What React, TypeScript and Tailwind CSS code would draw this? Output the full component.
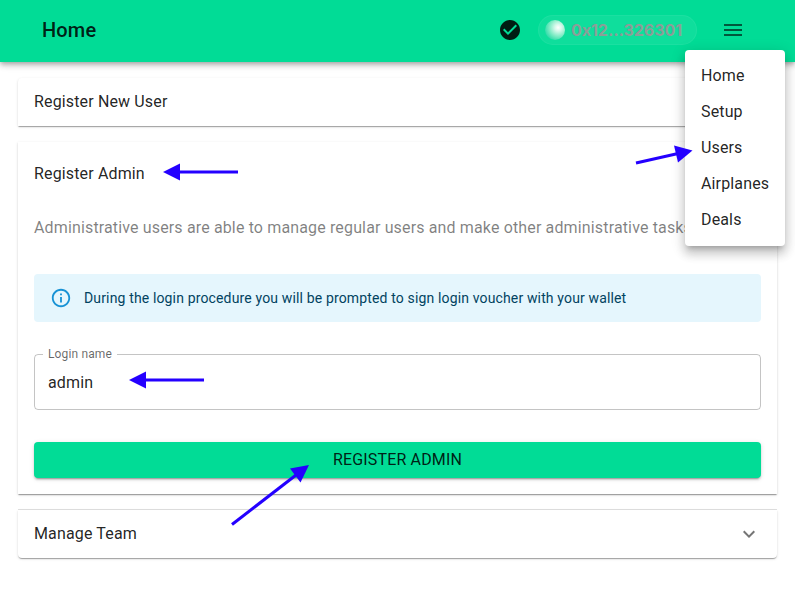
import React from "react";

const paper =
  "bg-white shadow-[0_2px_1px_-1px_rgba(0,0,0,0.2),0_1px_1px_0_rgba(0,0,0,0.14),0_1px_3px_0_rgba(0,0,0,0.12)]";

const menuItems = ["Home", "Setup", "Users", "Airplanes", "Deals"];

function Header() {
  return (
    <header className="relative flex h-[62px] items-center bg-[#01dc96] pl-[42px] pr-[50px] shadow-[0_2px_4px_-1px_rgba(0,0,0,0.2),0_4px_5px_0_rgba(0,0,0,0.14),0_1px_10px_0_rgba(0,0,0,0.12)]">
      <h1 className="grow pb-0.5 text-xl font-medium leading-8 tracking-[0.0075em] text-black/87">Home</h1>
      <div className="flex items-center pb-0.5">
        <svg viewBox="0 0 24 24" className="size-6 fill-black/87">
          <path d="M12 2C6.48 2 2 6.48 2 12s4.48 10 10 10 10-4.48 10-10S17.52 2 12 2zm-2 15-5-5 1.41-1.41L10 14.17l7.59-7.59L19 8l-9 9z" />
        </svg>
        <div className="ml-4 flex h-[30px] w-[159px] items-center rounded-full border border-white/5 bg-white/6 pl-1.5">
          <span className="size-5 rounded-full bg-[radial-gradient(circle_at_66%_38%,#ffffff_0%,#d8f9ec_18%,#7aebc3_50%,#1ed8a4_82%)]" />
          <span className="ml-1.5 whitespace-nowrap font-[Inter,sans-serif] text-base font-bold tracking-[-0.002em] text-[#8a9e98]">
            0x12...326301
          </span>
        </div>
        <svg viewBox="0 0 24 24" className="ml-6 size-6 fill-black/60">
          <path d="M3 18h18v-2H3v2zm0-5h18v-2H3v2zm0-7v2h18V6H3z" />
        </svg>
      </div>
    </header>
  );
}

function Menu() {
  return (
    <nav className="absolute left-[685px] top-[50px] w-[100px] rounded bg-white py-2 shadow-[0_5px_5px_-3px_rgba(0,0,0,0.2),0_8px_10px_1px_rgba(0,0,0,0.14),0_3px_14px_2px_rgba(0,0,0,0.12)]">
      {menuItems.map((item) => (
        <div key={item} className="px-4 py-1.5 leading-6">
          {item}
        </div>
      ))}
    </nav>
  );
}

function Arrows() {
  return (
    <svg
      viewBox="0 0 795 604"
      className="pointer-events-none absolute left-0 top-0 h-[604px] w-[795px] fill-[#2400ff] stroke-[#2400ff]"
    >
      <g strokeWidth="3">
        <path d="M238 172H178" />
        <path d="M204 380H144" />
        <path d="M636 163L677 153.800" />
        <path d="M232 524.500L298 473.500" />
      </g>
      <g stroke="none">
        <path d="M163 172L180 163.500V180.500Z" />
        <path d="M129 380L146 371.500V388.500Z" />
        <path d="M692.500 150.500L674 145.500L678 162.500Z" />
        <path d="M309 465L290 468.500L300.500 482.500Z" />
      </g>
    </svg>
  );
}

export default function App() {
  return (
    <div className="relative h-[604px] w-[795px] overflow-hidden bg-white font-[Roboto,sans-serif] text-base tracking-[0.009em] text-black/87">
      <Header />
      <main className="flex flex-col gap-4 px-[18px] pt-4">
        <section className={`${paper} flex h-12 items-center rounded-t px-4`}>Register New User</section>

        <section className={`${paper} px-4 pb-4`}>
          <div className="flex h-16 items-center">Register Admin</div>
          <p className="mt-2.5 whitespace-nowrap leading-6 tracking-[0.009em] text-black/50">
            Administrative users are able to manage regular users and make other administrative tasks
          </p>
          <div className="mt-[34px] flex h-12 items-center gap-3 rounded bg-[#e5f6fd] px-4 text-sm tracking-[0.0105em] text-[#014361]">
            <svg viewBox="0 0 24 24" className="size-[22px] fill-[#0288d1] opacity-90">
              <path d="M11 7h2v2h-2zm0 4h2v6h-2zm1-9C6.480 2 2 6.480 2 12s4.480 10 10 10 10-4.480 10-10S17.520 2 12 2zm0 18c-4.410 0-8-3.590-8-8s3.590-8 8-8 8 3.590 8 8-3.590 8-8 8z" />
            </svg>
            <span>During the login procedure you will be prompted to sign login voucher with your wallet</span>
          </div>
          <div className="relative mt-8 flex h-14 items-center rounded border border-black/23 px-[13px] pt-0.5">
            <span>admin</span>
            <label className="absolute -top-[11px] left-2 bg-white px-[5px] text-xs leading-[20px] text-black/60">
              Login name
            </label>
          </div>
          <button className="mt-8 flex h-9 w-full items-center justify-center rounded bg-[#01dc96] text-base tracking-[0.00938em] shadow-[0_3px_1px_-2px_rgba(0,0,0,0.2),0_2px_2px_0_rgba(0,0,0,0.14),0_1px_5px_0_rgba(0,0,0,0.12)]">
            REGISTER ADMIN
          </button>
        </section>

        <section className={`${paper} relative flex h-12 items-center justify-between rounded-b px-4`}>
          <div className="absolute inset-x-0 -top-px h-px bg-black/12" />
          <span>Manage Team</span>
          <svg viewBox="0 0 24 24" className="size-6 fill-black/54">
            <path d="M16.590 8.590 12 13.170 7.410 8.590 6 10l6 6 6-6z" />
          </svg>
        </section>
      </main>
      <Menu />
      <Arrows />
    </div>
  );
}
